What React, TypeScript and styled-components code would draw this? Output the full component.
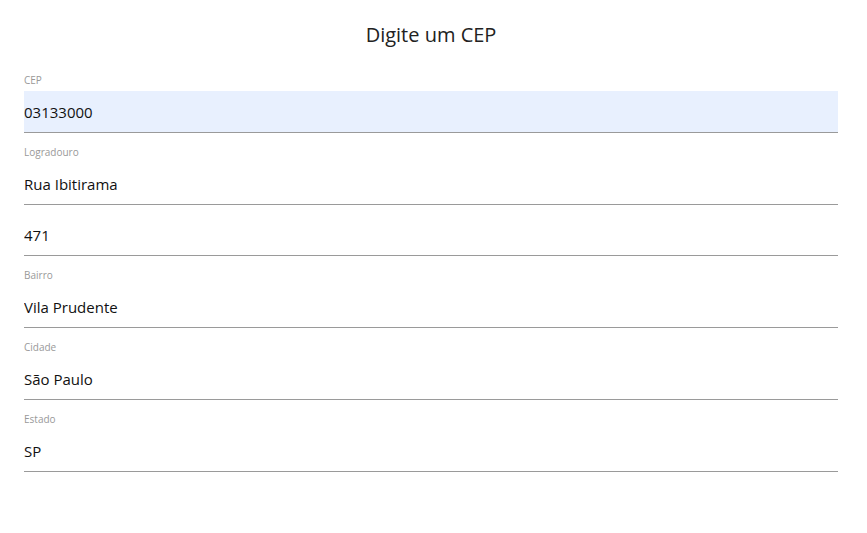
import React, { ReactElement } from 'react';
import styled, { createGlobalStyle } from 'styled-components';

const GlobalStyle = createGlobalStyle`
  body {
    margin: 0;
    background: #ffffff;
    font-family: 'Open Sans', 'Noto Sans', sans-serif;
    color: #222222;
  }
`;

const Page = styled.div`
  padding: 0 29px 0 24px;
`;

const Title = styled.h1`
  margin: 0 0 31px;
  padding-top: 22px;
  height: 39px;
  box-sizing: border-box;
  font-size: 20px;
  font-weight: 400;
  line-height: 26px;
  text-align: center;
  color: #222222;
`;

const Field = styled.div`
  display: flex;
  flex-direction: column;
  margin-top: 9px;
`;

const Label = styled.label`
  height: 21px;
  font-size: 10px;
  line-height: 21px;
  color: #999999;
`;

const Input = styled.input<{ $filled?: boolean }>`
  height: 42px;
  box-sizing: border-box;
  width: 100%;
  margin: 0;
  padding: 0;
  border: none;
  border-bottom: 1px solid #9a9a9a;
  background: ${(p) => (p.$filled ? '#e8f0fe' : 'transparent')};
  font-family: inherit;
  font-size: 15px;
  color: #111111;
  outline: none;
`;

interface FieldProps {
  label?: string;
  value: string;
  filled?: boolean;
}

const fields: FieldProps[] = [
  { label: 'CEP', value: '03133000', filled: true },
  { label: 'Logradouro', value: 'Rua Ibitirama' },
  { value: '471' },
  { label: 'Bairro', value: 'Vila Prudente' },
  { label: 'Cidade', value: 'São Paulo' },
  { label: 'Estado', value: 'SP' },
];

const App = (): ReactElement => {
  return (
    <>
      <GlobalStyle />
      <Page>
        <Title>Digite um CEP</Title>
        {fields.map((f, i) => (
          <Field key={i}>
            {f.label && <Label>{f.label}</Label>}
            <Input $filled={f.filled} defaultValue={f.value} readOnly />
          </Field>
        ))}
      </Page>
    </>
  );
};

export default App;
